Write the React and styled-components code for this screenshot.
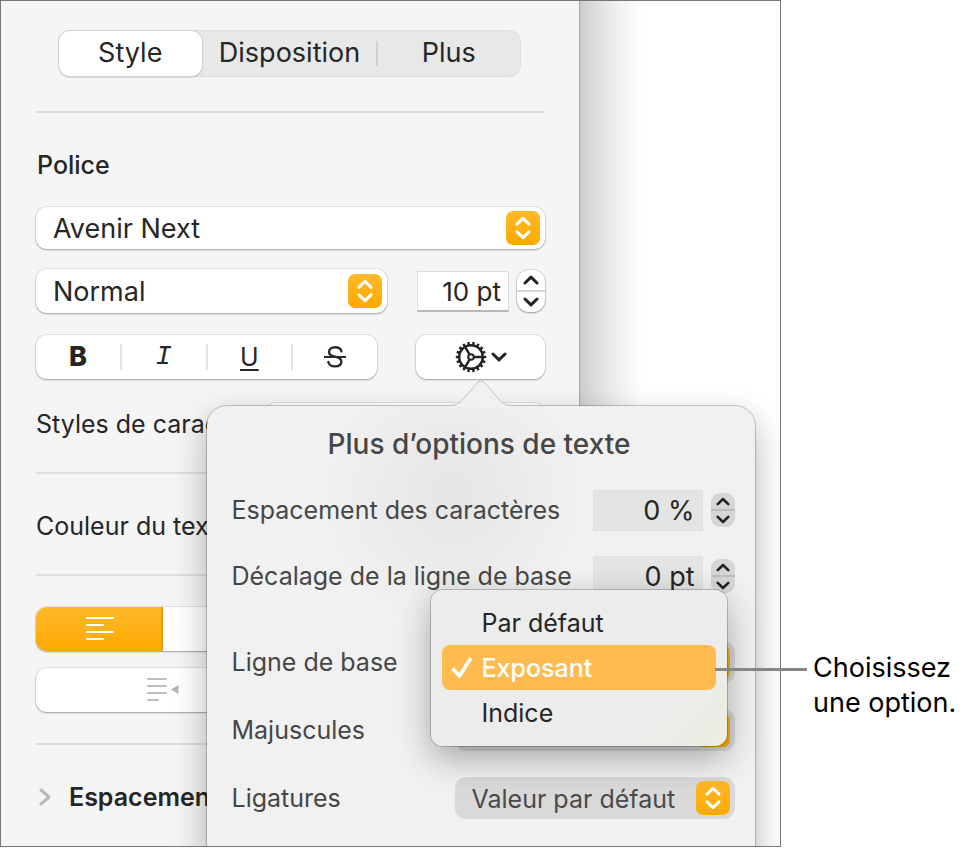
import React, { useState } from 'react'
import styled, { createGlobalStyle } from 'styled-components'

const GlobalStyle = createGlobalStyle`
  * {
    box-sizing: border-box;
  }
  body {
    margin: 0;
    background: #fff;
    color: #262626;
    font-family: Inter, 'Liberation Sans', sans-serif;
    font-size: 25px;
    line-height: 32px;
  }
  button,
  input,
  select {
    margin: 0;
    padding: 0;
    border: 0;
    background: none;
    color: inherit;
    font: inherit;
  }
`

const StyledPage = styled.div`
  display: flex;
  align-items: flex-start;
`

const StyledWindow = styled.main`
  flex: 1;
  min-width: 0;
  display: flex;
  overflow: hidden;
  border: 1px solid #77777a;
`

const StyledSidebar = styled.section`
  flex: 1;
  min-width: 0;
  padding: 29px 34px 33px 35px;
  background: #f5f5f5;
`

const StyledCanvas = styled.div`
  flex: none;
  width: 201px;
  border-left: 1px solid #a9a9a9;
  background: linear-gradient(
    to right,
    #cdcdcd,
    #dadada 12px,
    #e8e8e8 28px,
    #f5f5f5 44px,
    #fff 64px
  );
`

const StyledTabs = styled.div`
  display: grid;
  grid-template-columns: 1fr 176px 1fr;
  height: 47px;
  margin: 0 24px 34px 22px;
  border: 1px solid #dedede;
  border-radius: 12px;
  background: #e8e8e8;
`

const StyledTab = styled.button`
  position: relative;
  padding-bottom: 2px;
  border-radius: 11px;
  font-size: 27px;
  ${props =>
    props.$selected &&
    'background: #fff; box-shadow: 0 0 0 1px #d2d2d2, 0 1px 2px rgba(0, 0, 0, 0.35);'}
  ${props =>
    props.$divided &&
    `&::after {
      content: '';
      position: absolute;
      top: 10px;
      right: 0;
      width: 2px;
      height: 25px;
      background: #d0d0d0;
    }`}
`

const StyledRule = styled.hr`
  height: 2px;
  margin: 0;
  border: 0;
  background: #dedede;
`

const StyledGroup = styled.div`
  display: flex;
  flex-direction: column;
  padding: ${props => props.$padding};
`

const StyledHeading = styled.h2`
  margin: 0 0 26px 1px;
  font-size: 25px;
  font-weight: 500;
`

const StyledRow = styled.div`
  display: flex;
  align-items: center;
  justify-content: space-between;
  margin-top: ${props => props.$top || '0'};
  white-space: nowrap;
`

const StyledSelectBox = styled.div`
  display: grid;
  flex: none;
  width: ${props => props.$width || 'auto'};
  height: ${props => props.$height || '42px'};
  align-items: center;
  border-radius: 11px;
  background: ${props => (props.$dim ? '#d9d9d9' : '#fff')};
  color: ${props => (props.$dim ? '#4a4a4a' : 'inherit')};
  font-size: ${props => (props.$dim ? '25px' : '27px')};
  ${props =>
    !props.$dim &&
    'box-shadow: 0 0 0 1px rgba(0, 0, 0, 0.07), 0 1px 2px rgba(0, 0, 0, 0.3);'}

  select {
    grid-area: 1 / 1;
    width: 100%;
    height: 100%;
    padding: 2px 48px 0 17px;
    appearance: none;
    outline: none;
  }
  svg {
    grid-area: 1 / 1;
    justify-self: end;
    margin-right: 5px;
    pointer-events: none;
  }
`

const StyledNumber = styled.input`
  width: ${props => props.$width};
  height: 41px;
  padding-top: ${props => (props.$dim ? '0' : '2px')};
  padding-right: 7px;
  border: 1px solid #e0e0e0;
  ${props => !props.$dim && 'border-bottom: 2px solid #b8b8b8;'}
  background: ${props => (props.$dim ? '#e4e4e4' : '#fff')};
  color: #262626;
  font-size: ${props => (props.$dim ? '27px' : '26px')};
  text-align: right;
`

const StyledStepper = styled.div`
  display: flex;
  flex-direction: column;
  width: ${props => (props.$dim ? '24px' : '28px')};
  height: ${props => (props.$dim ? '34px' : '42px')};
  margin-left: 8px;
  border-radius: ${props => (props.$dim ? '9px' : '12px')};
  background: ${props => (props.$dim ? '#d6d6d6' : '#fff')};
  ${props =>
    !props.$dim &&
    'box-shadow: 0 0 0 1px rgba(0, 0, 0, 0.1), 0 1px 2px rgba(0, 0, 0, 0.3);'}

  button {
    flex: 1;
    display: flex;
    align-items: center;
    justify-content: center;
  }
  button + button {
    border-top: 2px solid ${props => (props.$dim ? '#bdbdbd' : '#d8d8d8')};
  }
`

const StyledSegments = styled.div`
  display: flex;
  align-items: center;
  width: ${props => props.$width || '100%'};
  height: 44px;
  margin-top: ${props => props.$top || '0'};
  overflow: hidden;
  border-radius: 11px;
  background: #fff;
  box-shadow: 0 0 0 1px rgba(0, 0, 0, 0.07), 0 1px 2px rgba(0, 0, 0, 0.3);
`

const StyledSegment = styled.button`
  flex: 1;
  display: flex;
  align-items: center;
  justify-content: center;
  height: ${props => (props.$fill ? '100%' : '26px')};

  &:not(:first-child) {
    border-left: ${props => (props.$fill ? '0' : '2px solid #e3e3e3')};
  }
  ${props =>
    props.$active &&
    'background: linear-gradient(#ffb92b, #ffa900); box-shadow: inset -2px 0 #e69a0d;'}
`

const StyledGearBox = styled.div`
  position: relative;
  width: 129px;
  white-space: normal;
`

const StyledGearButton = styled.button`
  display: flex;
  align-items: center;
  justify-content: center;
  gap: 4px;
  width: 100%;
  height: 44px;
  border-radius: 11px;
  background: #fff;
  box-shadow: 0 0 0 1px rgba(0, 0, 0, 0.07), 0 1px 2px rgba(0, 0, 0, 0.3);
`

const StyledDisclosure = styled.button`
  display: flex;
  align-items: center;
  gap: 17px;
  font-weight: 600;
`

const StyledPopover = styled.div`
  position: absolute;
  z-index: 2;
  top: calc(100% + 27px);
  left: 50%;
  width: 548px;
  padding: 22px 20px 60px 25px;
  transform: translateX(-50%);
  border-radius: 20px;
  background:
    radial-gradient(circle at 246px 90px, #e5e5e5, rgba(240, 240, 240, 0) 130px),
    #f1f1f1;
  box-shadow: 0 0 0 1px rgba(0, 0, 0, 0.2), 0 14px 34px rgba(0, 0, 0, 0.3);
  color: #464646;
`

const StyledArrow = styled.svg`
  position: absolute;
  bottom: 100%;
  left: 50%;
  margin: 0 0 -1px -32px;
`

const StyledPopoverTitle = styled.h3`
  margin: 0 8px 29px 0;
  font-size: 28px;
  font-weight: 500;
  line-height: 32px;
  text-align: center;
`

const StyledOption = styled.div`
  display: flex;
  align-items: center;
  height: 42px;
  margin-bottom: ${props => props.$gap || '26px'};

  & > label {
    flex: 1;
    white-space: nowrap;
  }
`

const StyledMenuBox = styled.div`
  position: relative;
`

const StyledMenu = styled.div`
  position: absolute;
  z-index: 3;
  top: -51px;
  left: -24px;
  width: 296px;
  padding: 10px 11px 11px;
  border-radius: 12px;
  background: linear-gradient(135deg, #ececec 75%, #edede2);
  box-shadow: 0 0 0 1px rgba(0, 0, 0, 0.2), 0 12px 34px rgba(0, 0, 0, 0.32);
`

const StyledMenuItem = styled.button`
  display: grid;
  grid-template-columns: 40px 1fr;
  align-items: center;
  width: 100%;
  height: 45px;
  border-radius: 8px;
  text-align: left;
  color: ${props => (props.$selected ? '#fff' : '#262626')};
  background: ${props => (props.$selected ? '#ffbb50' : 'none')};
  font-weight: ${props => (props.$selected ? 500 : 400)};

  span {
    grid-column: 2;
  }
  svg {
    justify-self: center;
  }
`

const StyledCallout = styled.aside`
  position: relative;
  flex: none;
  width: 188px;
  padding: 650px 0 0 32px;
  color: #000;
  font-size: 27px;
  line-height: 35px;
  white-space: nowrap;

  &::before {
    content: '';
    position: absolute;
    z-index: 4;
    top: 668px;
    left: -66px;
    width: 92px;
    height: 3px;
    background: #868686;
  }
  p {
    margin: 0;
  }
`

const BadgeIcon = () => (
  <svg width="34" height="34" viewBox="0 0 34 34" aria-hidden="true">
    <defs>
      <linearGradient id="badge" x1="0" y1="0" x2="0" y2="1">
        <stop offset="0" stopColor="#ffb92b" />
        <stop offset="1" stopColor="#ffa900" />
      </linearGradient>
    </defs>
    <rect width="34" height="34" rx="7" fill="url(#badge)" />
    <path
      d="M11 13.200 17 7.400l6 5.800M11 20.800l6 5.800 6-5.800"
      fill="none"
      stroke="#fff"
      strokeWidth="3"
      strokeLinecap="round"
      strokeLinejoin="round"
    />
  </svg>
)

const Chevron = ({ down, small }) => (
  <svg
    width={small ? 14 : 16}
    height={small ? 9 : 10}
    viewBox="0 0 16 10"
    aria-hidden="true"
  >
    <path
      d={down ? 'M2 2l6 5.8L14 2' : 'M2 8l6-5.8L14 8'}
      fill="none"
      stroke="#222"
      strokeWidth="3"
      strokeLinecap="round"
      strokeLinejoin="round"
    />
  </svg>
)

const teeth = Array.from({ length: 18 }, (_, i) => i * 20)

const GearIcon = () => (
  <svg width="32" height="32" viewBox="-16 -16 32 32" aria-hidden="true">
    <g fill="none" stroke="#222" strokeWidth="2.4">
      <circle r="11.8" strokeWidth="2.4" />
      <circle r="2.8" strokeWidth="2" />
      <path d="M3 0h8.800M-1.500-2.600l-4.400-7.600M-1.500 2.600l-4.400 7.600" />
      {teeth.map(angle => (
        <path key={angle} d="M12 0h3.200" transform={`rotate(${angle})`} />
      ))}
    </g>
  </svg>
)

const BoldIcon = styled.b`
  font-size: 27px;
  font-weight: 800;
`

const ItalicIcon = styled.i`
  font-family: 'Liberation Mono', monospace;
  font-size: 27px;
`

const UnderlineIcon = styled.u`
  text-decoration-thickness: 2px;
  text-underline-offset: 3px;
`

const StrikeIcon = () => (
  <svg width="24" height="24" viewBox="0 0 24 24" aria-hidden="true">
    <path
      d="M18.500 6.400C17.800 3.800 15.400 2.200 12.200 2.200c-3.600 0-6.200 1.900-6.200 4.700 0 2.400 1.700 3.600 5 4.400l2 .5c3.700.9 5.400 2.200 5.400 4.800 0 3-2.600 4.800-6.500 4.800-3.500 0-6.100-1.700-6.600-4.500"
      fill="none"
      stroke="#2a2a2a"
      strokeWidth="2.400"
      strokeLinecap="round"
    />
    <path d="M1 12h22" stroke="#2a2a2a" strokeWidth="2" />
  </svg>
)

const AlignIcon = () => (
  <svg width="28" height="26" viewBox="0 0 28 26" aria-hidden="true">
    <path
      d="M1 2h26M1 9h16M1 16h26M1 23h16"
      stroke="#fff"
      strokeWidth="2"
      strokeLinecap="round"
    />
  </svg>
)

const OutdentIcon = () => (
  <svg width="34" height="26" viewBox="0 0 34 26" aria-hidden="true">
    <path
      d="M2 2h18M2 9h18M2 16h18M2 23h10"
      stroke="#bdbdbd"
      strokeWidth="2"
      strokeLinecap="round"
    />
    <path d="M25 12.500l7.500-4.500v9z" fill="#b5b5b5" />
  </svg>
)

const CheckIcon = () => (
  <svg width="22" height="22" viewBox="0 0 22 22" aria-hidden="true">
    <path
      d="M2.500 12.500l6 6.500L19 2.500"
      fill="none"
      stroke="#fff"
      strokeWidth="3.600"
      strokeLinecap="round"
      strokeLinejoin="round"
    />
  </svg>
)

const SelectComponent = ({ id, label, value, ...box }) => (
  <StyledSelectBox {...box}>
    <select id={id} aria-label={label} defaultValue={value}>
      <option>{value}</option>
    </select>
    <BadgeIcon />
  </StyledSelectBox>
)

const StepperComponent = ({ dim }) => (
  <StyledStepper $dim={dim}>
    <button type="button" aria-label="Augmenter">
      <Chevron small={dim} />
    </button>
    <button type="button" aria-label="Diminuer">
      <Chevron down small={dim} />
    </button>
  </StyledStepper>
)

const tabs = ['Style', 'Disposition', 'Plus']
const baselines = ['Par défaut', 'Exposant', 'Indice']

const TextOptions = () => {
  const [baseline, setBaseline] = useState('Exposant')

  return (
    <StyledPopover role="dialog" aria-labelledby="options-title">
      <StyledArrow width="64" height="27" viewBox="0 0 64 27">
        <path
          d="M0 27v-1c7 0 10-2 14-6L28 3q4-4 8 0l14 17c4 4 7 6 14 6v1z"
          fill="#f1f1f1"
        />
        <path
          d="M0 25.500c7 0 10-2 14-6L28 3q4-4 8 0l14 16.500c4 4 7 6 14 6"
          fill="none"
          stroke="#c4c4c4"
        />
      </StyledArrow>
      <StyledPopoverTitle id="options-title">
        Plus d’options de texte
      </StyledPopoverTitle>
      <StyledOption $gap="24px">
        <label htmlFor="spacing">Espacement des caractères</label>
        <StyledNumber id="spacing" $dim $width="110px" defaultValue="0 %" />
        <StepperComponent dim />
      </StyledOption>
      <StyledOption $gap="44px">
        <label htmlFor="shift">Décalage de la ligne de base</label>
        <StyledNumber id="shift" $dim $width="110px" defaultValue="0 pt" />
        <StepperComponent dim />
      </StyledOption>
      <StyledOption>
        <label htmlFor="baseline">Ligne de base</label>
        <StyledMenuBox>
          <SelectComponent
            key={baseline}
            id="baseline"
            value={baseline}
            $dim
            $width="280px"
          />
          <StyledMenu role="listbox" aria-label="Ligne de base">
            {baselines.map(name => (
              <StyledMenuItem
                key={name}
                type="button"
                role="option"
                aria-selected={name === baseline}
                $selected={name === baseline}
                onClick={() => setBaseline(name)}
              >
                {name === baseline && <CheckIcon />}
                <span>{name}</span>
              </StyledMenuItem>
            ))}
          </StyledMenu>
        </StyledMenuBox>
      </StyledOption>
      <StyledOption>
        <label htmlFor="caps">Majuscules</label>
        <SelectComponent id="caps" value="Aucune" $dim $width="280px" />
      </StyledOption>
      <StyledOption $gap="0">
        <label htmlFor="ligatures">Ligatures</label>
        <SelectComponent
          id="ligatures"
          value="Valeur par défaut"
          $dim
          $width="280px"
        />
      </StyledOption>
    </StyledPopover>
  )
}

const App = () => {
  const [tab, setTab] = useState('Style')

  return (
    <>
      <GlobalStyle />
      <StyledPage>
        <StyledWindow>
          <StyledSidebar>
            <StyledTabs role="tablist">
              {tabs.map(name => (
                <StyledTab
                  key={name}
                  type="button"
                  role="tab"
                  aria-selected={name === tab}
                  $selected={name === tab}
                  $divided={name === 'Disposition'}
                  onClick={() => setTab(name)}
                >
                  {name}
                </StyledTab>
              ))}
            </StyledTabs>
            <StyledRule />
            <StyledGroup $padding="36px 0 27px">
              <StyledHeading>Police</StyledHeading>
              <SelectComponent label="Police" value="Avenir Next" />
              <StyledRow $top="20px">
                <SelectComponent
                  label="Graisse"
                  value="Normal"
                  $width="351px"
                  $height="44px"
                />
                <StyledRow>
                  <StyledNumber
                    aria-label="Corps"
                    $width="92px"
                    defaultValue="10 pt"
                  />
                  <StepperComponent />
                </StyledRow>
              </StyledRow>
              <StyledRow $top="22px">
                <StyledSegments $width="341px">
                  <StyledSegment type="button" aria-label="Gras">
                    <BoldIcon>B</BoldIcon>
                  </StyledSegment>
                  <StyledSegment type="button" aria-label="Italique">
                    <ItalicIcon>I</ItalicIcon>
                  </StyledSegment>
                  <StyledSegment type="button" aria-label="Souligné">
                    <UnderlineIcon>U</UnderlineIcon>
                  </StyledSegment>
                  <StyledSegment type="button" aria-label="Barré">
                    <StrikeIcon />
                  </StyledSegment>
                </StyledSegments>
                <StyledGearBox>
                  <StyledGearButton type="button" aria-label="Options">
                    <GearIcon />
                    <Chevron down />
                  </StyledGearButton>
                  <TextOptions />
                </StyledGearBox>
              </StyledRow>
              <StyledRow $top="24px">
                <label htmlFor="charstyle">Styles de caractère</label>
                <SelectComponent id="charstyle" value="Aucun" $width="280px" />
              </StyledRow>
            </StyledGroup>
            <StyledRule />
            <StyledGroup $padding="36px 0 32px">Couleur du texte</StyledGroup>
            <StyledRule />
            <StyledGroup $padding="31px 0">
              <StyledSegments>
                <StyledSegment type="button" aria-label="Gauche" $fill $active>
                  <AlignIcon />
                </StyledSegment>
                <StyledSegment type="button" aria-label="Centre" $fill />
                <StyledSegment type="button" aria-label="Droite" $fill />
                <StyledSegment type="button" aria-label="Justifié" $fill />
              </StyledSegments>
              <StyledSegments $top="17px">
                <StyledSegment type="button" aria-label="Diminuer le retrait">
                  <OutdentIcon />
                </StyledSegment>
                <StyledSegment type="button" aria-label="Augmenter le retrait" />
              </StyledSegments>
            </StyledGroup>
            <StyledRule />
            <StyledGroup $padding="36px 0 0">
              <StyledDisclosure type="button">
                <svg width="16" height="20" viewBox="0 0 16 20">
                  <path
                    d="M5 3l8 7-8 7"
                    fill="none"
                    stroke="#b9b9b9"
                    strokeWidth="3"
                    strokeLinecap="round"
                    strokeLinejoin="round"
                  />
                </svg>
                Espacement
              </StyledDisclosure>
            </StyledGroup>
          </StyledSidebar>
          <StyledCanvas />
        </StyledWindow>
        <StyledCallout>
          <p>
            Choisissez
            <br />
            une option.
          </p>
        </StyledCallout>
      </StyledPage>
    </>
  )
}

export default App
